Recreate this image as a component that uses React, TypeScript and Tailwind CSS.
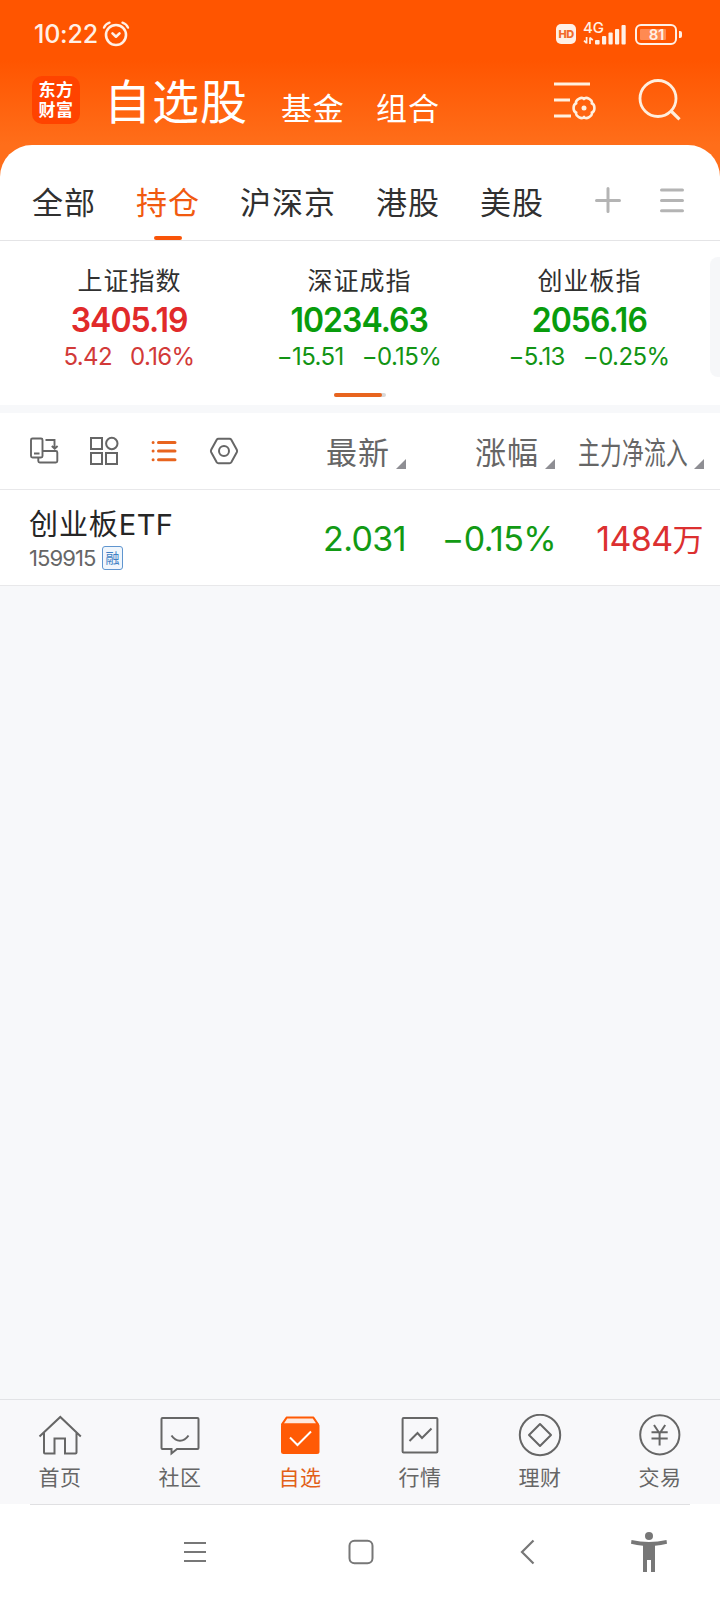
import type { ReactNode } from 'react';
import clsx from 'clsx';

// ─── Data ─────────────────────────────────────────────────────────────────────

const MARKET_TABS = ['全部', '持仓', '沪深京', '港股', '美股'];
const ACTIVE_MARKET = '持仓';

interface IndexQuote {
  name: string;
  value: string;
  change: string;
  percent: string;
  up: boolean;
}

const INDEXES: IndexQuote[] = [
  { name: '上证指数', value: '3405.19', change: '5.42', percent: '0.16%', up: true },
  { name: '深证成指', value: '10234.63', change: '−15.51', percent: '−0.15%', up: false },
  { name: '创业板指', value: '2056.16', change: '−5.13', percent: '−0.25%', up: false },
];

// ─── Status bar ───────────────────────────────────────────────────────────────

function StatusBar() {
  return (
    <div className="flex h-[70px] items-center pb-[2px] pl-[34px] pr-[38px] text-[#fff0e6]">
      <span className="w-[68px] whitespace-nowrap pt-px text-[25px] font-medium leading-none tracking-[-0.2px]">10:22</span>
      <svg width="28" height="28" viewBox="0 0 28 28" fill="none" stroke="currentColor" strokeWidth="2.6" strokeLinecap="round">
        <circle cx="14" cy="15" r="10" />
        <path d="M2 7.6Q3.500 4 7.500 2.700M26 7.6Q24.500 4 20.500 2.700" strokeWidth="2.4" />
        <path d="M10.500 13.400l3.500 3.300 3.500-3.300" strokeLinejoin="round" />
      </svg>
      <div className="ml-auto flex items-center">
        <span className="flex h-5 w-5 items-center justify-center rounded-[5px] bg-[#fff0e6] text-[11px] font-extrabold leading-none tracking-[-0.5px] text-[#f26a2a]">
          HD
        </span>
        <div className="ml-[7px] flex h-6 w-[44px]">
          <div className="flex w-[11px] flex-col">
            <span className="h-[15px] whitespace-nowrap text-[15px] font-medium leading-[11px]">4G</span>
            <svg width="11" height="8" viewBox="0 0 11 8" fill="none" stroke="currentColor" strokeWidth="1.7">
              <path d="M3.6 0v6.500M1 3.600l2.600 2.600M7 7V.5M9.8 3.200L7 .6" />
            </svg>
          </div>
          <svg width="33" height="24" viewBox="0 0 33 24" fill="currentColor">
            <rect x="1" y="18" width="4.600" height="4.500" rx="1" />
            <rect x="8" y="14" width="4.200" height="8.500" rx="1" />
            <rect x="14.500" y="10.500" width="4.200" height="12" rx="1" />
            <rect x="21" y="7" width="4.200" height="15.500" rx="1" />
            <rect x="27.500" y="3" width="4.200" height="19.500" rx="1" />
          </svg>
        </div>
        <div className="ml-[8px] flex items-center">
          <div className="flex h-[21px] w-[42px] items-center rounded-[6px] border-[2.500px] border-current p-[3px]">
            <span className="flex h-[11px] w-[26px] items-center justify-end whitespace-nowrap rounded-[1px] bg-[#ff8a52] pr-[2px] text-[15px] font-semibold leading-none tracking-[-0.4px]">
              81
            </span>
          </div>
          <span className="ml-[2px] h-[7px] w-[3px] rounded-r-[2px] bg-current" />
        </div>
      </div>
    </div>
  );
}

// ─── Header ───────────────────────────────────────────────────────────────────

function Header() {
  return (
    <div className="flex h-[75px] items-start pl-8 text-white">
      <div className="mt-[6px] flex h-12 w-12 flex-col items-center justify-center rounded-[10px] bg-[#ff4300] text-[17px] font-bold leading-[20px] tracking-[0.5px]">
        <span>东方</span>
        <span>财富</span>
      </div>
      <span className="ml-[24px] mt-[4px] w-[177px] whitespace-nowrap text-[47px] leading-[56px] tracking-[1px]">自选股</span>
      <span className="mt-[19px] w-[95px] whitespace-nowrap text-[31px] leading-[40px] tracking-[0.700px]">基金</span>
      <span className="mt-[19px] w-[177px] whitespace-nowrap text-[31px] leading-[40px] tracking-[1px]">组合</span>
      <svg className="mt-[10px]" width="44" height="40" viewBox="0 0 44 40" fill="none" stroke="#fff0e0" strokeWidth="3">
        <path d="M1 4h36M1 20h16M1 36h17" />
        <path
          d="M7.800-4.500C11.300-4 11.300 4 7.800 4.500C9.100 7.800 2.200 11.800 0 9C-2.200 11.800-9.100 7.800-7.800 4.500C-11.300 4-11.300-4-7.800-4.500C-9.100-7.800-2.200-11.800 0-9C2.200-11.800 9.100-7.800 7.800-4.500z"
          strokeWidth="2.600"
          strokeLinejoin="round"
          transform="translate(31 28)"
        />
        <circle cx="31" cy="28" r="2.500" fill="#fff0e0" stroke="none" />
      </svg>
      <svg className="ml-[41px] mt-[8px]" width="46" height="46" viewBox="0 0 46 46" fill="none" stroke="#ffeedd" strokeWidth="2.800">
        <circle cx="20" cy="20.500" r="18" />
        <path d="M32.500 32.500l9 8.800" strokeWidth="3.200" />
      </svg>
    </div>
  );
}

// ─── Market tabs ──────────────────────────────────────────────────────────────

function MarketTabs() {
  return (
    <div className="flex h-24 border-b border-[#e4e4e6] pl-8">
      <div className="flex gap-10">
        {MARKET_TABS.map((tab) => {
          const active = tab === ACTIVE_MARKET;
          return (
            <div
              key={tab}
              className={clsx(
                'flex flex-col items-center justify-between pt-[38px] text-[31px] leading-[40px] tracking-[1px]',
                active ? 'text-[#f15a10]' : 'text-[#303030]',
              )}
            >
              <span className="whitespace-nowrap">{tab}</span>
              {active && <span className="h-1 w-7 rounded-[2px] bg-[#f95408]" />}
            </div>
          );
        })}
      </div>
      <svg className="ml-[50px] mt-[41px]" width="28" height="28" viewBox="0 0 28 28" fill="none" stroke="#b4b4b4" strokeWidth="3" strokeLinecap="round">
        <path d="M14 2.500v23M2.500 14.500h23" />
      </svg>
      <svg className="ml-[37px] mt-[41px]" width="26" height="28" viewBox="0 0 26 28" fill="none" stroke="#b4b4b4" strokeWidth="3" strokeLinecap="round">
        <path d="M2.500 4h21M2.500 14.500h21M2.500 24.700h21" />
      </svg>
    </div>
  );
}

// ─── Index cards ──────────────────────────────────────────────────────────────

function IndexCard({ name, value, change, percent, up }: IndexQuote) {
  return (
    <div className="flex w-[230px] flex-col items-center whitespace-nowrap">
      <span className="mt-[24px] pl-px text-[25px] leading-[32px] tracking-[1px] text-[#303030]">{name}</span>
      <span
        className={clsx(
          'mt-[3px] scale-x-[0.94] text-[34px] font-semibold leading-[40px] tracking-[-1px]',
          up ? 'text-[#e12a2a]' : 'text-[#089c0c]',
        )}
      >
        {value}
      </span>
      <span className={clsx('mt-px flex gap-[18px] text-[24px] leading-[32px] tracking-[-0.600px]', up ? 'text-[#d23a38]' : 'text-[#129414]')}>
        <span>{change}</span>
        <span>{percent}</span>
      </span>
    </div>
  );
}

function IndexStrip() {
  return (
    <div className="h-[164px]">
      <div className="flex h-[152px] pl-[14px]">
        {INDEXES.map((quote) => (
          <IndexCard key={quote.name} {...quote} />
        ))}
        <div className="ml-[6px] mt-4 h-[120px] w-[10px] rounded-l-[8px] bg-[#f6f7f9]" />
      </div>
      <div className="mx-auto h-1 w-[52px] rounded-[2px] bg-[#d8d8d8]">
        <div className="h-1 w-12 rounded-[2px] bg-[#e8641e]" />
      </div>
    </div>
  );
}

// ─── Watchlist ────────────────────────────────────────────────────────────────

function SortMark() {
  return (
    <svg className="mt-[26px]" width="10" height="10" viewBox="0 0 10 10" fill="#8e8e93">
      <path d="M10 0v10H0z" />
    </svg>
  );
}

function ListToolbar() {
  return (
    <div className="flex h-[77px] items-center border-b border-[#e8e8ea] text-[#666]">
      <svg className="ml-[29px]" width="30" height="30" viewBox="0 0 30 30" fill="none" stroke="currentColor" strokeWidth="1.900">
        <rect x="2" y="2.500" width="11.500" height="19" rx="1.500" />
        <path d="M5 17.500h5.500M16.500 4h9v8M22.800 10l2.900 2.600 2.900-2.600M13.800 15h13q1.500 0 1.500 1.500v8.500q0 1.500-1.500 1.500h-16q-1.500 0-1.500-1.500V22" />
      </svg>
      <svg className="ml-[30px]" width="30" height="30" viewBox="0 0 30 30" fill="none" stroke="currentColor" strokeWidth="2">
        <rect x="2" y="2" width="11" height="11" />
        <circle cx="22.800" cy="7.500" r="5.700" />
        <rect x="2" y="17" width="11" height="11" />
        <rect x="17" y="17" width="11" height="11" />
      </svg>
      <svg className="ml-[31px]" width="30" height="30" viewBox="0 0 30 30" fill="none" stroke="#e8641e" strokeWidth="3" strokeLinecap="round">
        <path d="M8.500 6.500h16.500M8.500 15h16.500M8.500 23.700h16.500" />
        <path d="M3.100 6.500h.01M3.100 15h.01M3.100 23.700h.01" />
      </svg>
      <svg className="ml-[29px]" width="30" height="30" viewBox="0 0 30 30" fill="none" stroke="currentColor" strokeWidth="2">
        <path d="M9.500 2.800h11q1.200 0 1.800 1l5.500 10q.6 1.200 0 2.400l-5.500 10q-.6 1-1.800 1h-11q-1.200 0-1.800-1l-5.500-10q-.6-1.200 0-2.400l5.500-10q.6-1 1.800-1z" />
        <circle cx="15" cy="15" r="5" />
      </svg>
      <div className="ml-auto flex w-[80px] items-center justify-between">
        <span className="mt-[3px] whitespace-nowrap text-[31px] leading-[40px] tracking-[1px]">最新</span>
        <SortMark />
      </div>
      <div className="ml-[69px] flex w-[80px] items-center justify-between">
        <span className="mt-[3px] whitespace-nowrap text-[31px] leading-[40px] tracking-[1px]">涨幅</span>
        <SortMark />
      </div>
      <div className="ml-[23px] mr-[16px] flex w-[126px] items-center justify-between">
        <span className="mt-[3px] w-[111px] origin-left scale-x-[0.7] whitespace-nowrap text-[31px] leading-[40px] tracking-[0.400px]">主力净流入</span>
        <SortMark />
      </div>
    </div>
  );
}

function StockRow() {
  return (
    <div className="flex h-24 items-center border-b border-[#e8e8ea] pl-[29px] pr-[17px]">
      <div className="w-[250px] pt-px">
        <div className="whitespace-nowrap text-[29px] leading-[38px] tracking-[0.900px] text-[#262626]">
          创业板<span className="tracking-[0.500px]">ETF</span>
        </div>
        <div className="mt-px flex h-[26px] items-center text-[22px] leading-none text-[#666]">
          <span className="w-[73px] whitespace-nowrap tracking-[-0.900px]">159915</span>
          <span className="flex h-6 w-[21px] items-center justify-center rounded-[3px] border-[1.500px] border-[#5f95cf] bg-[#f0f6fc] text-[14px] leading-none text-[#3f7fc4]">
            融
          </span>
        </div>
      </div>
      <div className="ml-auto flex items-center whitespace-nowrap pt-[3px] text-[34px] leading-[44px] tracking-[-0.600px]">
        <span className="w-[100px] text-right text-[#129a14]">2.031</span>
        <span className="w-[150px] text-right text-[#129a14]">−0.15%</span>
        <span className="w-[147px] text-right text-[#dc3030]">
          1484<span className="text-[31px]">万</span>
        </span>
      </div>
    </div>
  );
}

// ─── Bottom tab bar ───────────────────────────────────────────────────────────

const TAB_ITEMS: { label: string; icon: ReactNode }[] = [
  {
    label: '首页',
    icon: <path d="M1.500 22.500L22.300 3l20.500 19.500M6 19V38.500q0 1 1 1h9.500V24.500h10.500v15h10.500q1 0 1-1V19" />,
  },
  {
    label: '社区',
    icon: (
      <>
        <path d="M4.500 4h35q1 0 1 1v29q0 1-1 1H19l-5.500 4.500V35H4.500q-1 0-1-1V5q0-1 1-1z" />
        <path d="M13.500 21.500q3.500 5.200 8.500 5.200t8.500-5.200" />
      </>
    ),
  },
  {
    label: '自选',
    icon: (
      <>
        <path d="M8.800 3.400h26.400l4.800 7H4z" fill="#ffe9dd" stroke="#ff5a05" strokeLinejoin="round" />
        <rect x="3" y="9.500" width="38.500" height="30.500" rx="2.500" fill="#ff5a05" stroke="none" />
        <path d="M12 23.500l7.500 7.500L33 17.500" stroke="#fff" />
      </>
    ),
  },
  {
    label: '行情',
    icon: (
      <>
        <rect x="4.600" y="4" width="34.800" height="34.500" rx="1" />
        <path d="M11.500 27l8-8 4.500 5L33.500 14.500" />
      </>
    ),
  },
  {
    label: '理财',
    icon: (
      <>
        <circle cx="22" cy="21" r="20.200" />
        <path d="M22 10l11 11-11 11-11-11z" strokeLinejoin="round" />
      </>
    ),
  },
  {
    label: '交易',
    icon: (
      <>
        <circle cx="21.800" cy="20.800" r="19.600" />
        <path d="M16 11l5.600 8.500L27.200 11M21.600 19v12.500M13.500 18.300h16.200M13.500 24.500h16.200" />
      </>
    ),
  },
];

function TabBar() {
  return (
    <div className="grid h-[105px] grid-cols-6 border-t border-[#e2e3e6] bg-[#f8f8fa]">
      {TAB_ITEMS.map((item) => (
        <div key={item.label} className={clsx('flex flex-col items-center pt-[14px]', item.label === '自选' ? 'text-[#e26018]' : 'text-[#666]')}>
          <svg width="44" height="44" viewBox="0 0 44 44" fill="none" stroke="currentColor" strokeWidth="2">
            {item.icon}
          </svg>
          <span className="mt-[5px] text-[21px] leading-[30px] tracking-[0.500px]">{item.label}</span>
        </div>
      ))}
    </div>
  );
}

// ─── System navigation ────────────────────────────────────────────────────────

function SystemNav() {
  return (
    <div className="flex h-24 flex-col bg-white text-[#777]">
      <div className="mx-[30px] h-px bg-[#e0e0e2]" />
      <div className="flex flex-1 items-center pb-[2px]">
        <svg className="ml-[180px]" width="30" height="30" viewBox="0 0 30 30" fill="none" stroke="currentColor" strokeWidth="2.200">
          <path d="M4 6h22M4 15h22M4 24h22" />
        </svg>
        <svg className="ml-[136px]" width="30" height="30" viewBox="0 0 30 30" fill="none" stroke="currentColor" strokeWidth="2">
          <rect x="3.500" y="3.700" width="23" height="22.600" rx="5" />
        </svg>
        <svg className="ml-[136px]" width="30" height="30" viewBox="0 0 30 30" fill="none" stroke="currentColor" strokeWidth="2.200">
          <path d="M21.500 3.500L10 15l11.500 11.500" />
        </svg>
        <svg className="ml-[87px]" width="40" height="44" viewBox="0 0 40 44" fill="currentColor">
          <circle cx="20" cy="6" r="4" />
          <path d="M2.500 10q17.500 4 35 0l.5 3.800q-6 1.400-12 2V42h-4V30h-4v12h-4V15.800q-6-.6-12-2z" />
        </svg>
      </div>
    </div>
  );
}

// ─── Page ─────────────────────────────────────────────────────────────────────

export default function App() {
  return (
    <div className="flex h-[1600px] w-[720px] flex-col overflow-hidden bg-[#f7f8fa] font-['Inter','Noto_Sans_CJK_SC',sans-serif]">
      <div className="bg-[linear-gradient(180deg,#ff5500_0px,#ff5500_60px,#ff6e1a_145px,#ff6e1a_180px)]">
        <StatusBar />
        <Header />
        <div className="overflow-hidden rounded-t-[32px] bg-white">
          <MarketTabs />
        </div>
      </div>
      <div className="bg-white">
        <IndexStrip />
      </div>
      <div className="mt-2 bg-white">
        <ListToolbar />
        <StockRow />
      </div>
      <div className="flex-1" />
      <TabBar />
      <SystemNav />
    </div>
  );
}
